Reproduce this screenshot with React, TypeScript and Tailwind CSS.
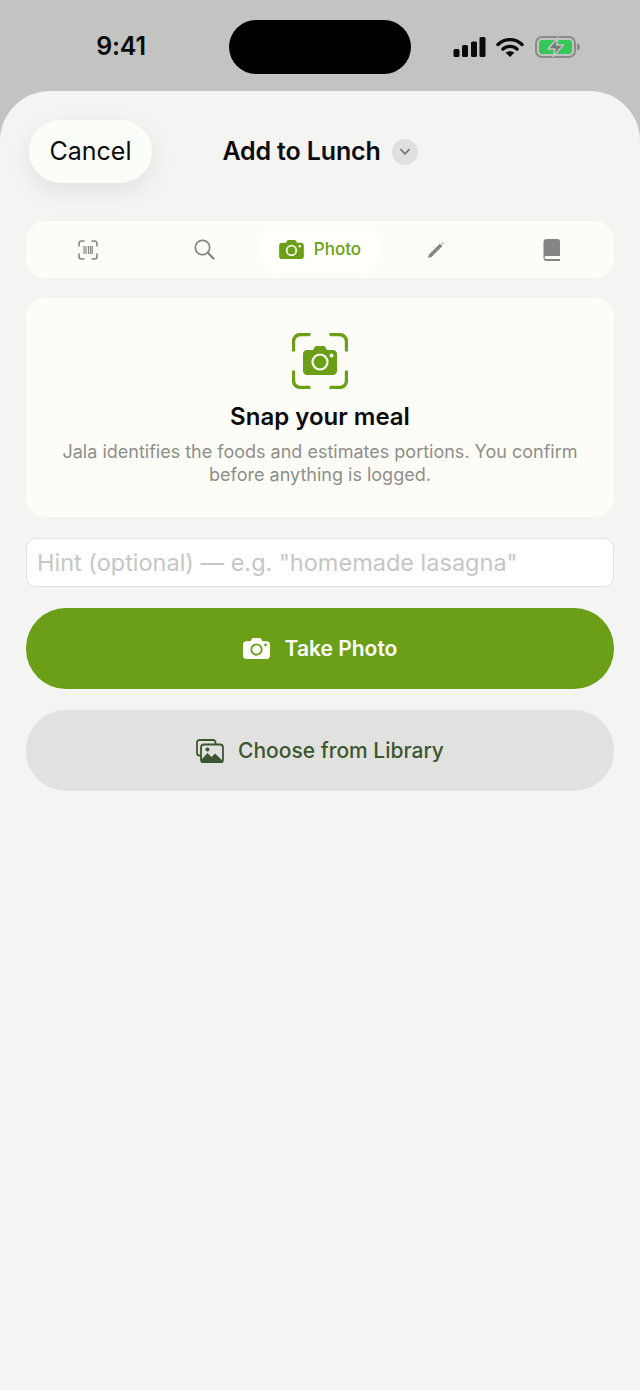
import React from "react";

const CameraGlyph = ({ color, hole, className }: { color: string; hole: string; className: string }) => (
  <svg viewBox="0 0 26 20" className={className}>
    <path fill={color} d="M3 3h4.2l1.2-2.1C8.7.4 9.2 0 9.9 0h6.2c.7 0 1.2.4 1.5.9L18.8 3H23c1.7 0 3 1.3 3 3v11c0 1.7-1.3 3-3 3H3c-1.700 0-3-1.300-3-3V6c0-1.700 1.300-3 3-3z" />
    <circle cx="13" cy="11" r="5" fill="none" stroke={hole} strokeWidth="1.800" />
    <circle cx="21.700" cy="6.600" r="1.300" fill={hole} />
  </svg>
);

const tabClass = "flex h-[47px] w-[116px] items-center justify-center";

export default function App() {
  return (
    <div className="flex h-[1390px] w-[640px] flex-col overflow-hidden bg-[#c3c3c1] font-['Inter','Liberation_Sans',sans-serif] text-[#0b0b0b]">
      <div className="flex h-[91px] shrink-0 items-start pt-5">
        <div className="flex h-[54px] w-[229px] items-center justify-center pl-[13px] pb-[0px] text-[25px] font-semibold tracking-[-0.2px]">9:41</div>
        <div className="h-[54px] w-[182px] rounded-[27px] bg-black" />
        <div className="flex h-[54px] items-center pl-[42px]">
          <svg viewBox="0 0 33 20" className="h-5 w-[33px]">
            <rect x="0.500" y="12" width="6" height="8" rx="1.500" fill="#0b0b0b" />
            <rect x="9" y="8" width="6" height="12" rx="1.500" fill="#0b0b0b" />
            <rect x="18" y="4.500" width="6" height="15.500" rx="1.500" fill="#0b0b0b" />
            <rect x="26.500" y="0" width="6" height="20" rx="1.500" fill="#0b0b0b" />
          </svg>
          <svg viewBox="0 0 28 20" className="ml-[10px] h-5 w-[28px]">
            <path d="M2 7.500C9 1 19 1 26 7.500" fill="none" stroke="#0b0b0b" strokeWidth="3.400" strokeLinecap="round" />
            <path d="M7 12C10.800 8.500 17.200 8.500 21 12" fill="none" stroke="#0b0b0b" strokeWidth="3.400" strokeLinecap="round" />
            <path d="M14 20l-4.300-4.300c2.400-2 6.200-2 8.600 0z" fill="#0b0b0b" />
          </svg>
          <svg viewBox="0 0 46 22" className="ml-[11px] h-[22px] w-[46px]">
            <rect x="1" y="1" width="39" height="20" rx="6" fill="none" stroke="#8b8b89" strokeWidth="2" />
            <rect x="4" y="4" width="33" height="14" rx="3.500" fill="#34c759" />
            <path d="M42 7.500c2 .5 3 2 3 3.500s-1 3-3 3.500z" fill="#8b8b89" />
            <path d="M23 1.500 13 13h7l-2 7.500L28.500 9h-7z" fill="#777775" stroke="#c3c3c1" strokeWidth="1.600" strokeLinejoin="round" />
          </svg>
        </div>
      </div>

      <div className="flex flex-1 flex-col rounded-t-[50px] bg-[#f4f4f2] px-[26px]">
        <div className="relative flex h-[63px] mt-[29px] items-center justify-center">
          <button className="absolute left-[3px] top-0 h-[63px] w-[123px] rounded-[32px] bg-[#fbfdf9] text-[25px] shadow-[0_8px_24px_rgba(0,0,0,0.08)]">Cancel</button>
          <div className="flex items-center">
            <span className="text-[25px] font-semibold tracking-[-0.15px]">Add to Lunch</span>
            <span className="ml-[11px] flex h-[26px] w-[26px] items-center justify-center rounded-full bg-[#e0e0df]">
              <svg viewBox="0 0 14 10" className="h-[8px] w-[12px]">
                <path d="M2 2l5 5.500L12 2" fill="none" stroke="#6f6f6f" strokeWidth="2" strokeLinecap="round" strokeLinejoin="round" />
              </svg>
            </span>
          </div>
        </div>

        <div className="mt-[38px] flex h-[57px] items-center rounded-[20px] bg-[#fefcf6] px-1">
          <div className={tabClass}>
            <svg viewBox="0 0 20 20" className="h-5 w-5">
              <path d="M1 6V3.500A2.500 2.500 0 0 1 3.500 1H6M14 1h2.500A2.500 2.500 0 0 1 19 3.500V6M19 14v2.500a2.500 2.500 0 0 1-2.500 2.500H14M6 19H3.500A2.500 2.500 0 0 1 1 16.500V14" fill="none" stroke="#858583" strokeWidth="1.600" strokeLinecap="round" />
              <path d="M6 6v8M8 6v8M10.500 6v8M12.500 6v8M14.200 6v8" stroke="#858583" strokeWidth="1.200" />
            </svg>
          </div>
          <div className={tabClass}>
            <svg viewBox="0 0 21 21" className="h-[21px] w-[21px]">
              <circle cx="8.500" cy="8.500" r="7.200" fill="none" stroke="#858583" strokeWidth="1.700" />
              <path d="M13.800 13.800L19.500 19.500" stroke="#858583" strokeWidth="2.200" strokeLinecap="round" />
            </svg>
          </div>
          <div className={`${tabClass} gap-[10px] rounded-[16px] bg-[#fffffb]`}>
            <CameraGlyph color="#6b9f17" hole="#fffffb" className="h-[19px] w-[25px]" />
            <span className="text-[17px] font-medium text-[#6b9f17]">Photo</span>
          </div>
          <div className={tabClass}>
            <svg viewBox="0 0 18 18" className="h-[18px] w-[18px]">
              <path d="M1 17l1-3.500L13 2.500 15.500 5 4.500 16z" fill="#858583" />
              <path d="M14.500 1.500l.8-.5 1.700 1.700-.5.8z" fill="#858583" />
            </svg>
          </div>
          <div className={tabClass}>
            <svg viewBox="0 0 18 22" className="h-[22px] w-[18px]">
              <path d="M3.500 0h11A2.500 2.500 0 0 1 17 2.500V17H3a1.500 1.500 0 0 0 0 3h14v2H3.500A3 3 0 0 1 .5 19V3A3 3 0 0 1 3.500 0z" fill="#858583" />
            </svg>
          </div>
        </div>

        <div className="mt-5 flex h-[219px] flex-col items-center rounded-[20px] bg-[#fefcf6] px-6 pt-[35px]">
          <svg viewBox="0 0 56 56" className="h-14 w-14">
            <path d="M1.500 17V8.500a7 7 0 0 1 7-7H17M39 1.500h8.500a7 7 0 0 1 7 7V17M54.500 39v8.500a7 7 0 0 1-7 7H39M17 54.500H8.500a7 7 0 0 1-7-7V39" fill="none" stroke="#6b9f17" strokeWidth="3.400" strokeLinecap="round" />
            <path fill="#6b9f17" d="M15 17h6l1.700-3c.4-.6 1-1 1.800-1h7c.8 0 1.400.4 1.800 1L35 17h6c2 0 4 1.600 4 4v17c0 2-2 4-4 4H15c-2 0-4-2-4-4V21c0-2.400 2-4 4-4z" />
            <circle cx="28" cy="29" r="7.500" fill="none" stroke="#fefcf6" strokeWidth="2.200" />
            <circle cx="39.500" cy="22.500" r="1.900" fill="#fefcf6" />
          </svg>
          <h1 className="mt-[13px] text-[24px] font-semibold leading-[30px]">Snap your meal</h1>
          <p className="mt-[8px] text-center text-[18px] leading-[23px] text-[#8e8e8c]">
            Jala identifies the foods and estimates portions. You confirm
            <br />
            before anything is logged.
          </p>
        </div>

        <div className="mt-[21px] flex h-[49px] items-center rounded-[10px] border border-[#e2e2e0] bg-white px-[10px] text-[23.500px] text-[#c6c6c6]">
          Hint (optional) — e.g. "homemade lasagna"
        </div>

        <button className="mt-[21px] flex h-[81px] items-center justify-center rounded-[40px] bg-[#6b9f17] text-white">
          <CameraGlyph color="#ffffff" hole="#6b9f17" className="h-[21px] w-[27px]" />
          <span className="ml-[15px] text-[21px] font-semibold">Take Photo</span>
        </button>

        <button className="mt-[21px] flex h-[81px] items-center justify-center rounded-[40px] bg-[#e1e1e0] text-[#3d5632]">
          <svg viewBox="0 0 28 24" className="h-6 w-7">
            <path d="M5 16.500H3.500A2.500 2.500 0 0 1 1 14V3.500A2.500 2.500 0 0 1 3.500 1H17a2.500 2.500 0 0 1 2.500 2.500V5" fill="none" stroke="#3d5632" strokeWidth="1.800" />
            <rect x="5" y="5.500" width="22" height="18" rx="3" fill="none" stroke="#3d5632" strokeWidth="1.800" />
            <path d="M5 21l6.500-7 4 4 3.500-3.500 8 7.500v.500a1.500 1.500 0 0 1-1.500 1.500H7a2 2 0 0 1-2-2z" fill="#3d5632" />
            <circle cx="11.500" cy="10.500" r="2" fill="#3d5632" />
          </svg>
          <span className="ml-[14px] text-[21px] font-medium">Choose from Library</span>
        </button>
      </div>
    </div>
  );
}
